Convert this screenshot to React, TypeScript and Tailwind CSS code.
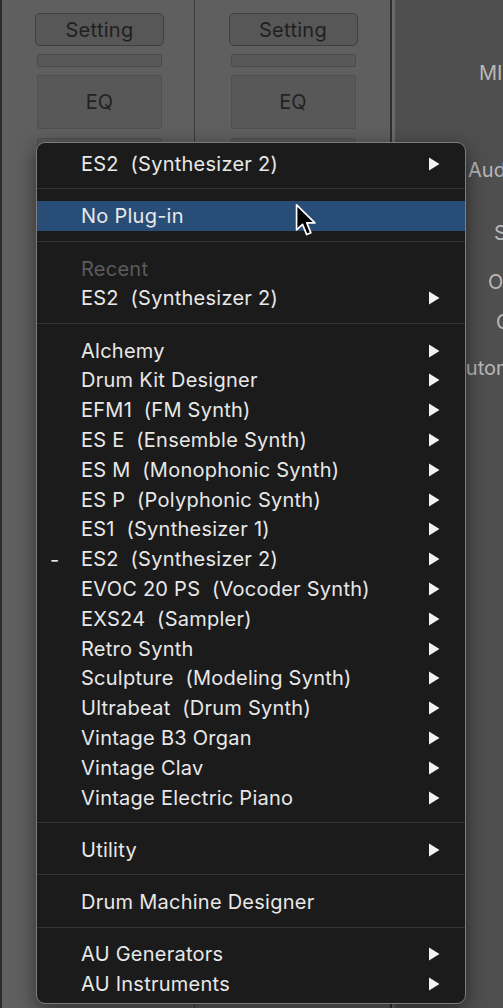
import React from "react";

type Row =
  | { kind: "item"; label: string; sub?: boolean; active?: boolean; mark?: boolean }
  | { kind: "header"; label: string }
  | { kind: "sep" };

const rows: Row[] = [
  { kind: "item", label: "ES2  (Synthesizer 2)", sub: true },
  { kind: "sep" },
  { kind: "item", label: "No Plug-in", active: true },
  { kind: "sep" },
  { kind: "header", label: "Recent" },
  { kind: "item", label: "ES2  (Synthesizer 2)", sub: true },
  { kind: "sep" },
  { kind: "item", label: "Alchemy", sub: true },
  { kind: "item", label: "Drum Kit Designer", sub: true },
  { kind: "item", label: "EFM1  (FM Synth)", sub: true },
  { kind: "item", label: "ES E  (Ensemble Synth)", sub: true },
  { kind: "item", label: "ES M  (Monophonic Synth)", sub: true },
  { kind: "item", label: "ES P  (Polyphonic Synth)", sub: true },
  { kind: "item", label: "ES1  (Synthesizer 1)", sub: true },
  { kind: "item", label: "ES2  (Synthesizer 2)", sub: true, mark: true },
  { kind: "item", label: "EVOC 20 PS  (Vocoder Synth)", sub: true },
  { kind: "item", label: "EXS24  (Sampler)", sub: true },
  { kind: "item", label: "Retro Synth", sub: true },
  { kind: "item", label: "Sculpture  (Modeling Synth)", sub: true },
  { kind: "item", label: "Ultrabeat  (Drum Synth)", sub: true },
  { kind: "item", label: "Vintage B3 Organ", sub: true },
  { kind: "item", label: "Vintage Clav", sub: true },
  { kind: "item", label: "Vintage Electric Piano", sub: true },
  { kind: "sep" },
  { kind: "item", label: "Utility", sub: true },
  { kind: "sep" },
  { kind: "item", label: "Drum Machine Designer" },
  { kind: "sep" },
  { kind: "item", label: "AU Generators", sub: true },
  { kind: "item", label: "AU Instruments", sub: true },
];

function SubArrow() {
  return (
    <svg width="12" height="14" viewBox="0 0 12 14" className="shrink-0">
      <path d="M1 0.5 L11.5 7 L1 13.5 Z" fill="#f2f2f2" />
    </svg>
  );
}

function Pointer() {
  return (
    <svg width="23" height="36" viewBox="0 0 22 34" className="absolute left-[258px] top-[2px]">
      <path
        d="M1.5 1.5 L1.5 25.5 L7.2 20.2 L11.2 30 L15.2 28.3 L11.3 18.8 L19 18.8 Z"
        fill="#000"
        stroke="#fff"
        strokeWidth="1.6"
        strokeLinejoin="round"
      />
    </svg>
  );
}

function StripControls() {
  return (
    <div className="flex flex-col items-center pt-[13px] w-[128px]">
      <div className="w-[129px] h-[33px] rounded-[5px] bg-[#575757] border border-[#3f3f3f] flex items-center justify-center text-[20px] tracking-[0.3px] text-[#202020]">
        Setting
      </div>
      <div className="mt-[8px] w-[125px] h-[13px] rounded-[2px] bg-[#585858] border border-[#4c4c4c]" />
      <div className="mt-[8px] w-[125px] h-[54px] rounded-[2px] bg-[#585858] border border-[#4f4f4f] flex items-center justify-center text-[20px] text-[#232323]">
        EQ
      </div>
      <div className="mt-[9px] w-[125px] h-[30px] rounded-[3px] bg-[#585858] border border-[#4c4c4c]" />
    </div>
  );
}

export default function App() {
  return (
    <div
      className="relative w-[503px] h-[1008px] overflow-hidden bg-[#5e5e5e] flex"
      style={{ fontFamily: "Inter, 'Liberation Sans', sans-serif" }}
    >
      {/* mixer channel strips */}
      <div className="w-[2px] bg-[#2c2c2c]" />
      <div className="w-[192px] bg-[#5f5f5f] flex justify-center pl-[3px]">
        <StripControls />
      </div>
      <div className="w-[1px] bg-[#3b3b3b]" />
      <div className="w-[195px] bg-[#5f5f5f] flex justify-center pl-[1px]">
        <StripControls />
      </div>
      <div className="w-[2px] bg-[#2f2f2f]" />
      <div className="w-[3px] bg-[#6a6a6a]" />

      {/* inspector labels, running off the window edge */}
      <div className="flex-1 bg-[#4f4f4f] relative text-[20px] leading-[28px] text-[#b9b9b9] whitespace-nowrap">
        <div className="absolute left-[84px] top-[59px]">MIDI</div>
        <div className="absolute left-[73px] top-[156px]">Audio</div>
        <div className="absolute left-[99px] top-[219px]">Setting</div>
        <div className="absolute left-[93px] top-[268px]">Output</div>
        <div className="absolute left-[101px] top-[308px]">Group</div>
        <div className="absolute left-[57px] top-[354px]">Automation</div>
      </div>

      {/* plug-in popup menu */}
      <div className="absolute left-[36px] top-[142px] w-[430px] rounded-[9px] border border-[#7c7c7c] bg-[#1b1b1b] pt-[6px] pb-[4px] shadow-[0_6px_20px_rgba(0,0,0,0.5)] text-[20px] tracking-[0.25px] text-[#e8e8e8]">
        {rows.map((row, i) => {
          if (row.kind === "sep") {
            return (
              <div key={i} className="pt-[9.5px] pb-[12px]">
                <div className="h-[1px] bg-[#333333]" />
              </div>
            );
          }
          if (row.kind === "header") {
            return (
              <div key={i} className="h-[29.8px] flex items-center pl-[44px] text-[#5b5b5b]">
                {row.label}
              </div>
            );
          }
          return (
            <div
              key={i}
              className={
                row.active
                  ? "relative h-[29.8px] flex items-center pl-[44px] pr-[25px] bg-[#284e78]"
                  : "relative h-[29.8px] flex items-center pl-[44px] pr-[25px]"
              }
            >
              {row.mark && <span className="absolute left-[13px] top-[1px]">-</span>}
              <span className="flex-1 whitespace-pre">{row.label}</span>
              {row.sub && <SubArrow />}
              {row.active && <Pointer />}
            </div>
          );
        })}
      </div>
    </div>
  );
}
